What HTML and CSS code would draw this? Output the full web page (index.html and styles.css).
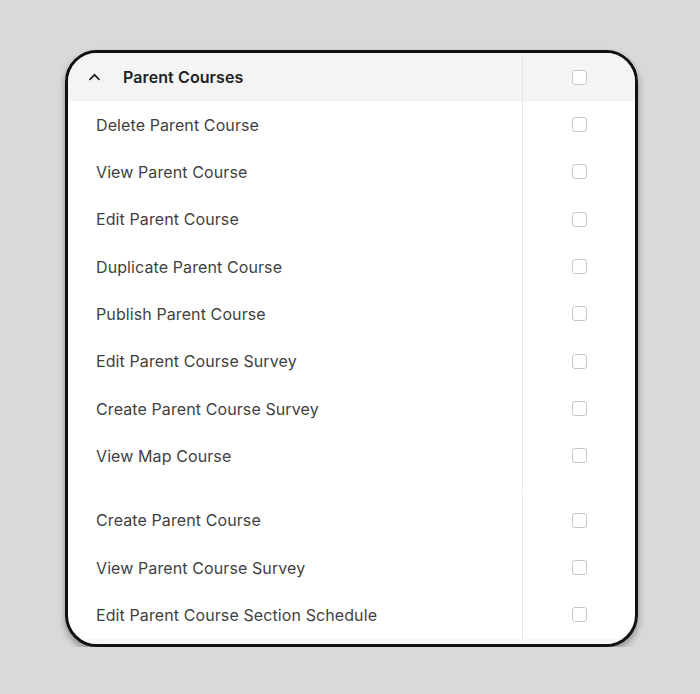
FILE: index.html
```html
<!DOCTYPE html>
<html lang="en">
<head>
    <meta charset="UTF-8">
    <meta name="viewport" content="width=device-width, initial-scale=1.0">
    <title>Permissions</title>
    <link rel="stylesheet" href="styles.css">
</head>
<body>
    <div class="card">
        <div class="section">
            <div class="row head">
                <div class="label">
                    <svg class="chevron" width="13" height="8" viewBox="0 0 13 8"><path d="M1.5 6.8 L6.5 1.8 L11.5 6.8" fill="none" stroke="#222" stroke-width="1.7"/></svg>
                    <span>Parent Courses</span>
                </div>
                <div class="check"><span class="box"></span></div>
            </div>
            <div class="row"><div class="label">Delete Parent Course</div><div class="check"><span class="box"></span></div></div>
            <div class="row"><div class="label">View Parent Course</div><div class="check"><span class="box"></span></div></div>
            <div class="row"><div class="label">Edit Parent Course</div><div class="check"><span class="box"></span></div></div>
            <div class="row"><div class="label">Duplicate Parent Course</div><div class="check"><span class="box"></span></div></div>
            <div class="row"><div class="label">Publish Parent Course</div><div class="check"><span class="box"></span></div></div>
            <div class="row"><div class="label">Edit Parent Course Survey</div><div class="check"><span class="box"></span></div></div>
            <div class="row"><div class="label">Create Parent Course Survey</div><div class="check"><span class="box"></span></div></div>
            <div class="row"><div class="label">View Map Course</div><div class="check"><span class="box"></span></div></div>
            <div class="row spacer"><div class="label"></div><div class="check"></div></div>
        </div>
        <div class="section second">
            <div class="row spacer"><div class="label"></div><div class="check"></div></div>
            <div class="row"><div class="label">Create Parent Course</div><div class="check"><span class="box"></span></div></div>
            <div class="row"><div class="label">View Parent Course Survey</div><div class="check"><span class="box"></span></div></div>
            <div class="row"><div class="label">Edit Parent Course Section Schedule</div><div class="check"><span class="box"></span></div></div>
        </div>
        <div class="foot"></div>
    </div>
</body>
</html>
```

FILE: styles.css
```css
body {
    margin: 0;
    background-color: #d9d9d9;
    font-family: Inter, "Noto Sans", sans-serif;
}

.card {
    margin: 50px 0 0 65px;
    width: 567px;
    border: 3px solid #111;
    border-radius: 32px;
    background-color: #fff;
    overflow: hidden;
    box-shadow: 0 4px 7px rgba(0, 0, 0, 0.35);
}

.row {
    display: grid;
    grid-template-columns: 454px 1fr;
    height: 47.33px;
}

.row.head {
    height: 48px;
    background-color: #f4f4f4;
}

.row.spacer {
    height: 8.5px;
}

.label {
    display: flex;
    align-items: center;
    padding-left: 28px;
    font-size: 16px;
    letter-spacing: 0.1px;
    color: #3f3f3f;
}

.head .label {
    padding-left: 20px;
    gap: 22px;
    font-weight: 600;
    color: #222;
}

.check {
    display: flex;
    align-items: center;
    justify-content: center;
    border-left: 1px solid #e6e6e6;
}

.second .spacer .check {
    border-left-color: #ededed;
}

.box {
    width: 13px;
    height: 13px;
    border: 1.5px solid #c8c8c8;
    border-radius: 3px;
    background-color: #fff;
}

.foot {
    height: 5px;
    background-color: #f6f6f6;
}
```
